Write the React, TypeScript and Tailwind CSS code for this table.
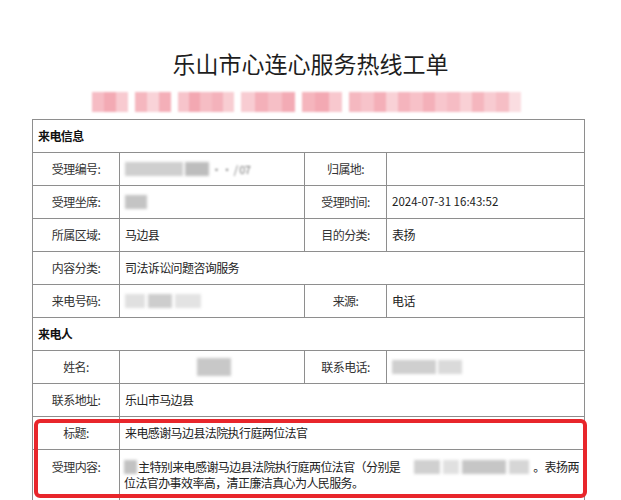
import React from "react";

const pinkGroups: string[][] = [
  ["bg-[#f6bcc4]", "bg-[#f3aab4]", "bg-[#f8cad0]"],
  ["bg-[#f5b7bf]", "bg-[#f9d3d8]", "bg-[#f4afb8]"],
  ["bg-[#f7c4cb]", "bg-[#f3a8b2]", "bg-[#f6bdc4]", "bg-[#f4b2bb]", "bg-[#f8cdd2]"],
  ["bg-[#f8ccd2]", "bg-[#f4b0b9]", "bg-[#f6bfc6]", "bg-[#f3abb5]"],
  ["bg-[#f5b5bd]", "bg-[#f3a9b3]", "bg-[#f8c8ce]"],
  [
    "bg-[#f5b8c0]", "bg-[#f7c3ca]", "bg-[#f4afb8]", "bg-[#f9d1d6]", "bg-[#f5b4bd]",
    "bg-[#f7c1c8]", "bg-[#f4b0b9]", "bg-[#f8c6cd]", "bg-[#f6bcc4]", "bg-[#f9d0d5]",
    "bg-[#f5b6be]", "bg-[#f8cbd1]", "bg-[#f6bec5]", "bg-[#fadde1]",
  ],
];
const pinkWidths = ["w-[36px]", "w-[36px]", "w-[56px]", "w-[54px]", "w-[40px]", "w-[172px]"];

const cell = "border-r border-b border-[#8e8e8e] h-[33px] flex items-center";
const label = `${cell} justify-center text-[#333]`;
const value = `${cell} pl-[5px] text-[#222]`;

function Blur({ w, h = 14, tone = "bg-[#c9c9c9]" }: { w: number; h?: number; tone?: string }) {
  return <span className={`inline-block align-middle blur-[1.5px] ${tone}`} style={{ width: w, height: h }} />;
}

export default function App() {
  return (
    <div
      className="relative w-[621px] h-[500px] overflow-hidden bg-white"
      style={{ fontFamily: '"Noto Sans CJK SC", "Noto Sans", sans-serif' }}
    >
      <div className="pt-[47px] h-[79px] text-center text-[23px] leading-[32px] text-[#1e1e1e]">
        乐山市心连心服务热线工单
      </div>
      <div className="mt-[13px] ml-[92px] w-[440px] h-[20px] flex gap-[7px] blur-[1.2px]">
        {pinkGroups.map((g, gi) => (
          <div key={gi} className={`flex h-full ${pinkWidths[gi]}`}>
            {g.map((c, i) => (
              <div key={i} className={`flex-1 h-full ${c}`} />
            ))}
          </div>
        ))}
      </div>
      <div className="mt-[7px] ml-[32px] w-[553px] grid grid-cols-[87px_185px_82px_198px] border-l border-t border-[#8e8e8e] text-[12px] tracking-[-0.6px]">
        <div className={`${cell} col-span-4 pl-[5px] font-bold text-[#111]`}>来电信息</div>

        <div className={label}>受理编号:</div>
        <div className={`${value} gap-[2px]`}>
          <Blur w={58} tone="bg-[#cfcfcf]" />
          <Blur w={24} tone="bg-[#bdbdbd]" />
          <span className="blur-[0.8px] text-[#777] text-[11px]">·· / 07</span>
        </div>
        <div className={label}>归属地:</div>
        <div className={value}></div>

        <div className={label}>受理坐席:</div>
        <div className={value}>
          <Blur w={22} tone="bg-[#c4c4c4]" />
        </div>
        <div className={label}>受理时间:</div>
        <div className={`${value} text-[11.5px] tracking-normal`}>2024-07-31 16:43:52</div>

        <div className={label}>所属区域:</div>
        <div className={value}>马边县</div>
        <div className={label}>目的分类:</div>
        <div className={value}>表扬</div>

        <div className={label}>内容分类:</div>
        <div className={`${value} col-span-3`}>司法诉讼问题咨询服务</div>

        <div className={label}>来电号码:</div>
        <div className={`${value} gap-[3px]`}>
          <Blur w={20} tone="bg-[#e0e0e0]" />
          <Blur w={24} tone="bg-[#cdcdcd]" />
          <Blur w={26} tone="bg-[#e3e3e3]" />
        </div>
        <div className={label}>来源:</div>
        <div className={value}>电话</div>

        <div className={`${cell} col-span-4 pl-[5px] font-bold text-[#111]`}>来电人</div>

        <div className={label}>姓名:</div>
        <div className={`${value} pl-[77px]`}>
          <Blur w={34} h={18} tone="bg-[#c8c8c8]" />
        </div>
        <div className={label}>联系电话:</div>
        <div className={`${value} gap-[2px]`}>
          <Blur w={44} tone="bg-[#cfcfcf]" />
          <Blur w={24} tone="bg-[#dadada]" />
        </div>

        <div className={label}>联系地址:</div>
        <div className={`${value} col-span-3`}>乐山市马边县</div>

        <div className={label}>标题:</div>
        <div className={`${value} col-span-3`}>来电感谢马边县法院执行庭两位法官</div>

        <div className="border-r border-b border-[#8e8e8e] h-[70px] flex justify-center pt-[9px] leading-[16px] text-[#333]">
          受理内容:
        </div>
        <div className="col-span-3 border-r border-b border-[#8e8e8e] h-[70px] pl-[4px] pr-[4px] pt-[9px] leading-[16px] text-[#222]">
          <div className="flex items-center whitespace-nowrap h-[16px]">
            <Blur w={13} tone="bg-[#c2c2c2]" />
            <span className="ml-[1px]">主特别来电感谢马边县法院执行庭两位法官（分别是</span>
            <span className="ml-[14px] flex gap-[3px]">
              <Blur w={26} tone="bg-[#d0d0d0]" />
              <Blur w={16} tone="bg-[#e0e0e0]" />
              <Blur w={44} tone="bg-[#c6c6c6]" />
              <Blur w={20} tone="bg-[#d6d6d6]" />
            </span>
            <span className="ml-[4px]">。表扬两</span>
          </div>
          <div className="whitespace-nowrap h-[16px]">位法官办事效率高，清正廉洁真心为人民服务。</div>
        </div>
      </div>

      <div className="absolute left-[34px] top-[419px] w-[553px] h-[79px] border-[4px] border-[#e8262b] rounded-[6px]" />
    </div>
  );
}
